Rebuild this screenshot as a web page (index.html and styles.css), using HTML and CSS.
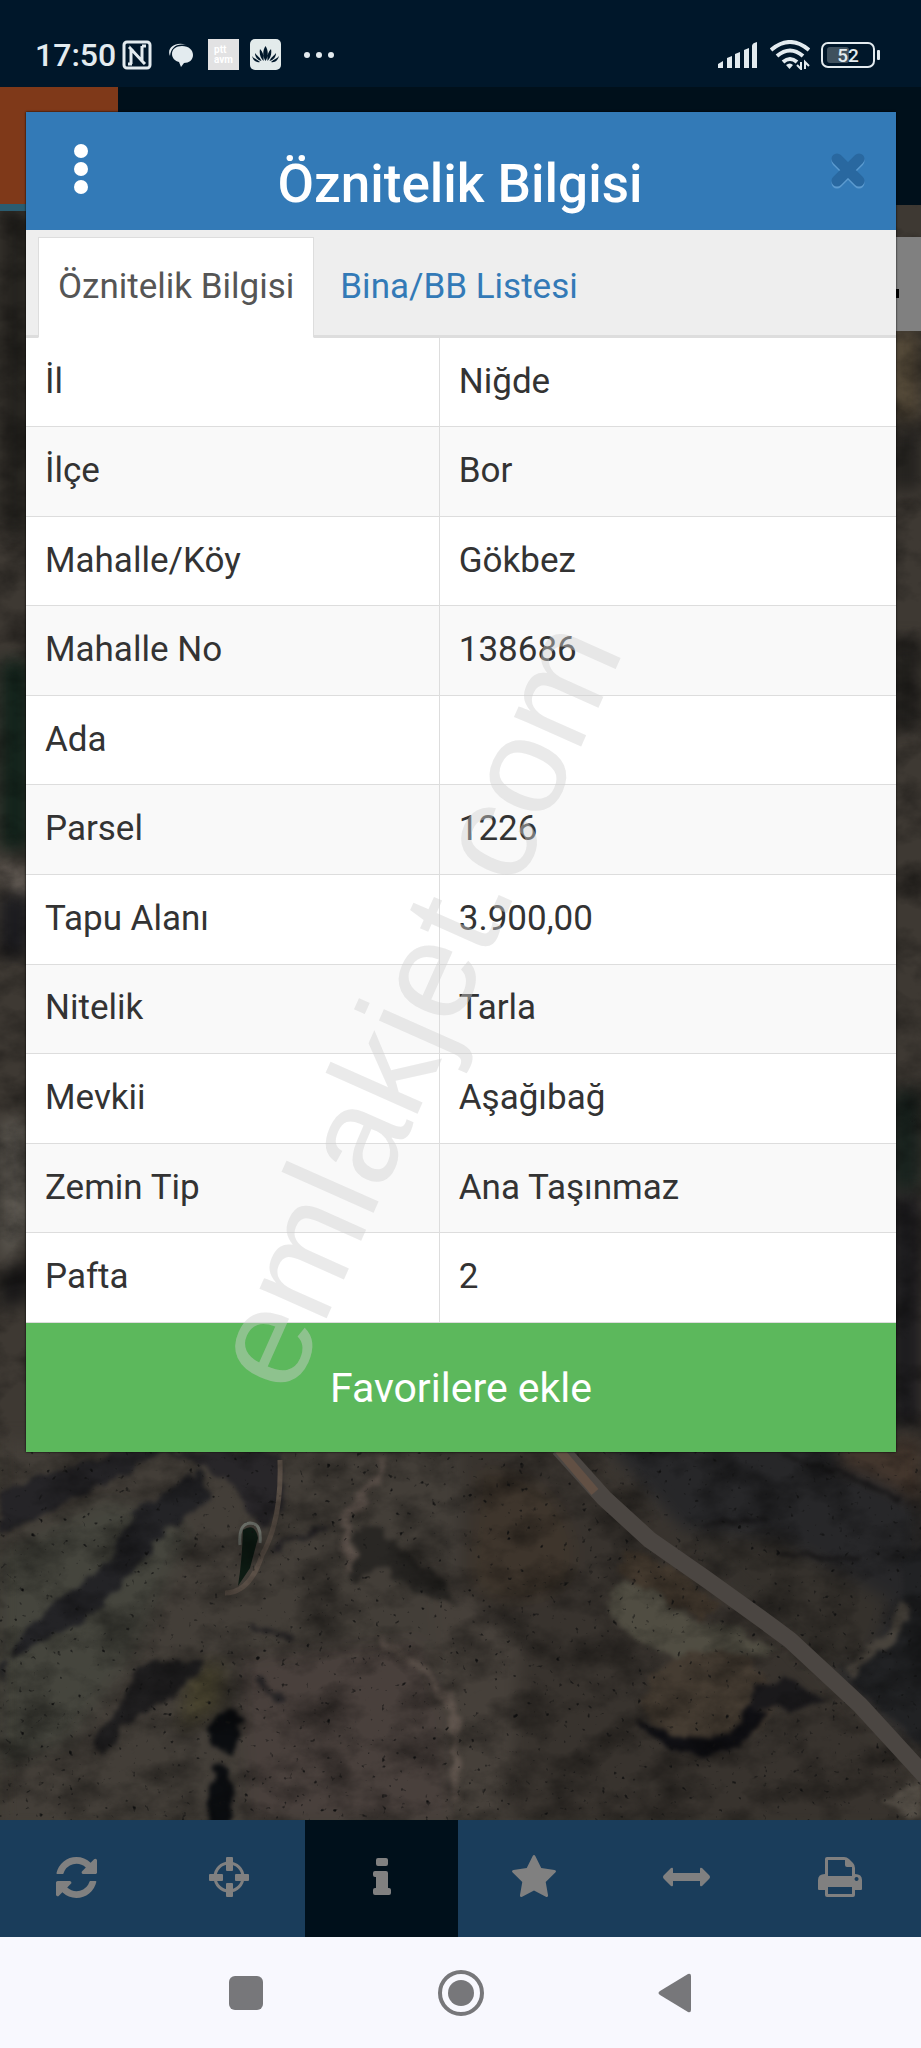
FILE: index.html
```html
<!doctype html>
<html lang="tr">
<head>
<meta charset="utf-8">
<title>Öznitelik Bilgisi</title>
<meta name="viewport" content="width=device-width, initial-scale=1">
<link rel="stylesheet" href="styles.css">
</head>
<body>
<div class="status-bar">
  <div class="status-left">
    <span class="clock">17:50</span>
    <svg width="30" height="30" viewBox="0 0 30 30" fill="none" stroke="#e3ebef"><rect x="2" y="2" width="26" height="26" rx="3" stroke-width="3"/><path d="M9 24V9l11 12V6M6 24h4M7 7l4 4M20 6h4M19 20l4 4" stroke-width="3"/></svg>
    <svg class="bubble" width="26" height="26" viewBox="0 0 26 26"><path d="M2 14C-2 6 8-1 18 3 8 1 3 6 2 14z" fill="#e3ebef"/><path d="M14 4c7 0 11 4 11 9s-4 8-9 8l-3 4-2-5c-4-1-7-4-7-8 0-5 4-8 10-8z" fill="#e3ebef"/></svg>
    <svg class="ptt" width="31" height="31" viewBox="0 0 31 31"><rect width="31" height="31" fill="#e2e2e3"/><text x="6" y="14">ptt</text><text x="6" y="24">avm</text></svg>
    <svg class="lotus" width="31" height="31" viewBox="0 0 31 31"><rect width="31" height="31" rx="5" fill="#e3ebeb"/><path d="M15.500 7c3 4 3 11 0 15-3-4-3-11 0-15zM10 10c3 3 4 7 3.500 12-3-3-4.500-7-3.500-12zM21 10c-3 3-4 7-3.500 12 3-3 4.500-7 3.500-12zM5 14c2 3 5 4 6.500 8-4-1-6.500-4-6.500-8zM26 14c-2 3-5 4-6.500 8 4-1 6.500-4 6.500-8zM2 17c2 3 5 3 8 6-4 1-7-2-8-6zM29 17c-2 3-5 3-8 6 4 1 7-2 8-6z" fill="#00172a"/></svg>
    <svg class="dots" width="30" height="8" viewBox="0 0 30 8" fill="#e3ebef"><circle cx="3" cy="4" r="3"/><circle cx="15" cy="4" r="3"/><circle cx="27" cy="4" r="3"/></svg>
  </div>
  <div class="status-right">
    <svg width="42" height="28" viewBox="0 0 42 28" fill="#e3ebef"><path d="M1 27v-4l5-3v7zM10 27V17l5-2v12zM18 27V13l5-2v16zM27 27V9l5-2v20zM35 27V5q0-3 5-4v26z"/></svg>
    <svg width="40" height="30" viewBox="0 0 40 30" fill="none" stroke="#e3ebef" stroke-width="4"><path d="M1 10q19-16 38 0M7 16q13-11 26 0M13 22q7-6 14 0"/><path d="M16 25q4-3 7 0l-3.500 4z" fill="#e3ebef" stroke="none"/><path d="M31 22v7l-4-4M35 29v-7l4 4" stroke-width="2"/></svg>
    <svg class="battery" width="60" height="26" viewBox="0 0 60 26"><rect x="1" y="1" width="52" height="24" rx="6" fill="none" stroke="#e3ebef" stroke-width="2"/><rect x="6" y="5" width="22" height="16" rx="3" fill="#3f515e"/><rect x="56" y="8" width="3" height="10" rx="1" fill="#e3ebef"/><text x="27" y="20" text-anchor="middle">52</text></svg>
  </div>
</div>

<main class="app">
  <div class="screen">
    <svg class="map" viewBox="0 87 921 1733" preserveAspectRatio="xMidYMax slice" color-interpolation-filters="sRGB" aria-hidden="true">
      <defs>
        <filter id="soft" x="-10%" y="-10%" width="120%" height="120%"><feGaussianBlur stdDeviation="8"/></filter>
        <filter id="edge" x="-10%" y="-10%" width="120%" height="120%"><feTurbulence type="fractalNoise" baseFrequency=".06" numOctaves="4" seed="8" result="n"/><feDisplacementMap in="SourceGraphic" in2="n" scale="16" xChannelSelector="R" yChannelSelector="G"/><feGaussianBlur stdDeviation="2"/></filter>
        <filter id="grain" x="0" y="0" width="100%" height="100%"><feTurbulence type="fractalNoise" baseFrequency=".02 .03" numOctaves="6" seed="4"/><feColorMatrix values="0 0 0 0 0  0 0 0 0 0  0 0 0 0 0  .9 0 0 0 -.35"/></filter>
        <filter id="scrub" x="0" y="0" width="100%" height="100%"><feTurbulence type="fractalNoise" baseFrequency=".16" numOctaves="2" seed="12"/><feColorMatrix values="0 0 0 0 .06  0 0 0 0 .06  0 0 0 0 .06  0 6 0 0 -4.200"/></filter>
      </defs>
      <rect y="87" width="921" height="1733" fill="#3e3933"/>
      <g filter="url(#soft)">
        <path d="M0 205h30v330H0z" fill="#25231f"/>
        <path d="M0 660h30v190H0z" fill="#12231b"/>
        <path d="M0 860l30 16v20L0 880z" fill="#857b72"/>
        <path d="M0 895h30v60H0z" fill="#1b1b1f"/>
        <path d="M0 1120h30v110l-30 40z" fill="#5c5851"/>
        <path d="M0 1275l30-15v40l-30 10z" fill="#171617"/>
        <path d="M890 330h31v90h-31z" fill="#554a39"/>
        <path d="M890 430h31v60h-31zM890 640h31v90h-31z" fill="#24221f"/>
        <path d="M890 1090h31v100h-31z" fill="#18221e"/>
        <path d="M890 1195h31v230h-31z" fill="#1d1c1f"/>
        <path d="M0 1440h460v390H0z" fill="#433e38"/>
        <path d="M0 1550l110-50 80 30-60 130-60 80-70 30z" fill="#45453d"/>
        <path d="M240 1660l180-20 50 180H250z" fill="#49403c"/>
        <path d="M460 1440h120l180 172 161 170v48H460z" fill="#38332e"/>
        <path d="M600 1440h321v312l-100-90-110-100z" fill="#272729"/>
        <path d="M840 1440h81v67q-40-30-81-40z" fill="#43362d"/>
        <path d="M680 1530l100 10 110 60-20 60-40 10z" fill="#35312c"/>
        <path d="M480 1470q70 0 90 60t-40 70-60-40z" fill="#3e352c"/>
        <path d="M430 1560l90 80-10 190h-60z" fill="#46403a"/>
        <path d="M185 1680q20-25 40-15l-5 45-40 20z" fill="#48432f"/>
      </g>
      <g filter="url(#edge)">
        <path d="M0 1490l60-20 70-22h40l-70 38-50 24-50 25z" fill="#252427"/>
        <path d="M200 1470q-55 30-70 50l-20 40-50 42-35 25-25 55v-20l40-20 50-25 45-48 35-42 40-28z" fill="#232326"/>
        <path d="M165 1452h115l5 55-25 25-25-45-30-20z" fill="#282629"/>
        <path d="M140 1662h65l-25 30-50 30-30 35-5-22 30-35z" fill="#201f20"/>
        <path d="M355 1530q25-10 45 20l45 30 10 25-35-10-40-30-28 15z" fill="#292724"/>
        <path d="M225 1710q20 0 17 20l-8 25-25-12q-8-18 16-33zM213 1762l18 10 2 60h-24z" fill="#0b0d10"/>
        <path d="M270 1550l60-25M250 1625l45 15M255 1680l30 20" fill="none" stroke="#252325" stroke-width="5"/>
        <path d="M385 1455q-5 30-40 60l5 60M380 1640q60 30 75 80l3 80" fill="none" stroke="#5f544d" stroke-width="8"/>
        <path d="M605 1605l15-22 22 0 48 35 50 12 35 22-70 15-40-15-45-22z" fill="#504d42"/>
        <path d="M620 1550l40 10 60 45-20 15-50-30-30-15z" fill="#43392e"/>
        <path d="M640 1700q15-40 60-48t70 30q15 40-30 62t-80-5z" fill="#453c32"/>
        <path d="M636 1718q25 40 70 36t60-40l-15-10q-10 30-42 33t-73-19z" fill="#101014"/>
        <path d="M750 1690l35-12 40 22-30 10-40-2z" fill="#1a191b"/>
        <path d="M902 1560v60l-25 30-30 25 20 20 64 60V1540z" fill="#212224"/>
        <path d="M905 1600q-5 40-40 55l-20 20" fill="none" stroke="#48433c" stroke-width="10"/>
        <path d="M785 1455q70 20 115 45M700 1525l70-5M780 1555l80 5" fill="none" stroke="#171617" stroke-width="4"/>
        <path d="M880 1800l41-20v40z" fill="#544e46"/>
      </g>
      <path d="M240 1545q-2-21 10-22 12 0 10 20" fill="none" stroke="#6c7069" stroke-width="3"/>
      <path d="M243 1530q12-8 15 8l-8 30-12 18q4-25 5-56z" fill="#0d1b13"/>
      <path d="M280 1460q2 60-18 95-12 38-37 38" fill="none" stroke="#5b5047" stroke-width="5"/>
      <rect y="205" width="921" height="1615" filter="url(#grain)"/>
      <rect y="1452" width="921" height="368" filter="url(#scrub)"/>
      <path d="M559 1448l45 50 46 42q70 48 140 100l70 65 66 72" fill="none" stroke="#4b4642" stroke-width="17"/>
      <path d="M559 1450l36 42" fill="none" stroke="#625044" stroke-width="9"/>
    </svg>
    <div class="brand"><span class="brand-logo"></span></div>
    <div class="search"></div>
  </div>

  <section class="modal">
    <header class="modal-header">
      <button class="more" type="button" aria-label="Menü"><svg width="14" height="50" viewBox="0 0 14 50" fill="#fff"><circle cx="7" cy="7" r="7"/><circle cx="7" cy="25" r="7"/><circle cx="7" cy="43" r="7"/></svg></button>
      <h1>Öznitelik Bilgisi</h1>
      <button class="close" type="button" aria-label="Kapat"><svg width="36" height="38" viewBox="0 0 36 38" fill="none" stroke-width="11" stroke-linejoin="round" stroke-linecap="round"><path d="M7 9l22 22M29 9L7 31" stroke="#5c9bd0"/><path d="M7 7l22 22M29 7L7 29" stroke="#2968a0"/></svg></button>
    </header>
    <nav class="tabs">
      <a class="tab active" href="#">Öznitelik Bilgisi</a>
      <a class="tab" href="#">Bina/BB Listesi</a>
    </nav>
    <table class="attributes">
      <tr><th scope="row">İl</th><td>Niğde</td></tr>
      <tr><th scope="row">İlçe</th><td>Bor</td></tr>
      <tr><th scope="row">Mahalle/Köy</th><td>Gökbez</td></tr>
      <tr><th scope="row">Mahalle No</th><td>138686</td></tr>
      <tr><th scope="row">Ada</th><td></td></tr>
      <tr><th scope="row">Parsel</th><td>1226</td></tr>
      <tr><th scope="row">Tapu Alanı</th><td>3.900,00</td></tr>
      <tr><th scope="row">Nitelik</th><td>Tarla</td></tr>
      <tr><th scope="row">Mevkii</th><td>Aşağıbağ</td></tr>
      <tr><th scope="row">Zemin Tip</th><td>Ana Taşınmaz</td></tr>
      <tr><th scope="row">Pafta</th><td>2</td></tr>
    </table>
    <button class="favorite" type="button">Favorilere ekle</button>
  </section>
</main>

<nav class="toolbar">
  <button type="button" aria-label="Yenile"><svg width="41" height="41" viewBox="0 0 1536 1536"><path d="M1511 928q0 5-1 7-64 268-268 434.500t-478 166.500q-146 0-282.500-55t-243.500-157l-129 129q-19 19-45 19t-45-19-19-45v-448q0-26 19-45t45-19h448q26 0 45 19t19 45-19 45l-137 137q71 66 161 102t187 36q134 0 250-65t186-179q11-17 53-117 8-23 30-23h192q13 0 22.500 9.500t9.500 22.500zm25-800v448q0 26-19 45t-45 19h-448q-26 0-45-19t-19-45 19-45l138-138q-148-137-349-137-134 0-250 65t-186 179q-11 17-53 117-8 23-30 23h-199q-13 0-22.500-9.500t-9.500-22.500v-7q65-268 270-434.500t480-166.500q146 0 284 55.500t245 156.500l130-129q19-19 45-19t45 19 19 45z"/></svg></button>
  <button type="button" aria-label="Konum"><svg width="40" height="40" viewBox="0 0 40 40"><circle cx="20" cy="20" r="14" fill="none" stroke="#808080" stroke-width="3"/><rect x="17" width="7" height="14" rx="1"/><rect x="17" y="26" width="7" height="14" rx="1"/><rect y="17" width="14" height="7" rx="1"/><rect x="26" y="17" width="14" height="7" rx="1"/></svg></button>
  <button class="active" type="button" aria-label="Bilgi"><svg width="18" height="40" viewBox="0 0 18 40"><path d="M5 1h8q2 0 2 2v4q0 2-2 2H5q-2 0-2-2V3q0-2 2-2zM2 14h11q2 0 2 2v15h1q2 0 2 2v3q0 2-2 2H2q-2 0-2-2v-3q0-2 2-2h1V20H2q-2 0-2-2v-2q0-2 2-2z"/></svg></button>
  <button type="button" aria-label="Favoriler"><svg width="44" height="44" viewBox="0 0 1664 1664"><path d="M1664 615q0 22-26 48l-363 354 86 500q1 7 1 20 0 21-10.500 35.500t-30.500 14.500q-19 0-40-12l-449-236-449 236q-22 12-40 12-21 0-31.500-14.500t-10.500-35.500q0-6 2-20l86-500-364-354q-25-27-25-48 0-37 56-46l502-73 225-455q19-41 49-41t49 41l225 455 502 73q56 9 56 46z"/></svg></button>
  <button type="button" aria-label="Ölçüm"><svg width="47" height="40" viewBox="0 0 47 40"><path d="M0 20q0-1 1-2l7-7q2-1 2 1v4h27v-4q0-2 2-1l7 7q2 2 0 4l-7 7q-2 1-2-1v-4H10v4q0 2-2 1l-7-7q-1-1-1-2z"/></svg></button>
  <button type="button" aria-label="Yazdır"><svg width="44" height="40" viewBox="0 0 44 40"><path fill-rule="evenodd" d="M9 0h17q3 0 5 2l4 4q2 2 2 5v6q7 0 7 6v9q0 1-1 1h-6v5q0 2-2 2H9q-2 0-2-2v-5H1q-1 0-1-1v-9q0-6 7-6V2q0-2 2-2zM10 3v16h24v-9h-5q-2 0-2-2V3zM10 30v7h24v-7zM38.500 20a2 2 0 1 0 .1 0z"/></svg></button>
</nav>

<nav class="system-nav">
  <button type="button" aria-label="Son uygulamalar"><svg width="34" height="34" viewBox="0 0 34 34"><rect width="34" height="34" rx="6"/></svg></button>
  <button type="button" aria-label="Ana ekran"><svg width="48" height="48" viewBox="0 0 48 48"><circle cx="24" cy="24" r="21" fill="none" stroke="#77777a" stroke-width="4"/><circle cx="24" cy="24" r="13"/></svg></button>
  <button type="button" aria-label="Geri"><svg width="34" height="40" viewBox="0 0 34 40"><path d="M2 18L30 1q3-1 3 2v34q0 3-3 2L2 22q-3-2 0-4z"/></svg></button>
</nav>

<div class="watermark">emlakjet.com</div>
</body>
</html>
```
FILE: styles.css
```css
* {
  box-sizing: border-box;
}
body {
  margin: 0;
  min-height: 100vh;
  display: flex;
  flex-direction: column;
  position: relative;
  overflow-x: hidden;
  font-family: Roboto, "Noto Sans", sans-serif;
  font-size: 35px;
  line-height: 48px;
  color: #333;
}
button {
  border: 0;
  padding: 0;
  background: none;
  font: inherit;
  cursor: pointer;
}
svg {
  display: block;
}

.status-bar {
  height: 87px;
  padding: 22px 40px 0 35px;
  display: flex;
  justify-content: space-between;
  align-items: center;
  background-color: #00172a;
  color: #e3ebef;
}
.status-left,
.status-right {
  display: flex;
  align-items: center;
  gap: 11px;
}
.clock {
  font-size: 32px;
  font-weight: 500;
  margin-right: -5px;
}
.bubble {
  margin: 0 3px 0 5px;
}
.dots {
  margin-left: 12px;
}
.ptt text {
  font-size: 10px;
  font-weight: 700;
  fill: #fff;
}
.battery text {
  font-size: 19px;
  font-weight: 500;
  fill: #e3ebef;
}

.app {
  position: relative;
  flex: 1;
  padding: 25px 25px 368px 26px;
}
/* dimmed map screen behind the dialog */
.screen {
  position: absolute;
  inset: 0;
  overflow: hidden;
  background-color: #35312c;
}
.map {
  position: absolute;
  width: 100%;
  height: 100%;
}
.brand {
  position: relative;
  height: 118px;
  background-color: #00101b;
}
.brand-logo {
  display: block;
  width: 118px;
  height: 124px;
  background-color: #7f3919;
  border-bottom: 7px solid #2a5c70;
}
.search {
  position: relative;
  height: 94px;
  margin: 32px 0 0 50%;
  background-color: #808080;
}
.search::after {
  content: "";
  position: absolute;
  right: 22px;
  top: 52px;
  width: 8px;
  height: 9px;
  background-color: #000;
}

.modal {
  position: relative;
  background-color: #fff;
  box-shadow: 0 0 2px #000;
}
.modal-header {
  height: 118px;
  padding: 0 30px 0 48px;
  display: flex;
  justify-content: space-between;
  align-items: center;
  background-color: #337ab7;
  color: #fff;
}
.modal-header h1 {
  margin: 0;
  padding-top: 26px;
  font-size: 53px;
  line-height: 60px;
  font-weight: 500;
}
.more {
  width: 16px;
  padding-bottom: 5px;
}
.close {
  width: 36px;
}
.tabs {
  height: 108px;
  padding: 7px 12px 0;
  display: flex;
  gap: 6px;
  background-color: #eee;
  border-bottom: 3px solid #ddd;
}
.tab {
  height: 101px;
  padding: 25px 19px;
  border: 1px solid transparent;
  color: #337ab7;
  text-decoration: none;
}
.tab.active {
  color: #555;
  background-color: #fff;
  border-color: #ddd;
  border-bottom-color: #fff;
}
.attributes {
  width: 100%;
  height: 985px;
  border-collapse: collapse;
}
.attributes th,
.attributes td {
  padding: 0 19px 1px;
  text-align: left;
  font-weight: 400;
  border-bottom: 1px solid #ddd;
}
.attributes th {
  width: 47.5%;
  border-right: 1px solid #ddd;
}
.attributes tr:nth-child(even) {
  background-color: #f9f9f9;
}
.favorite {
  display: block;
  width: 100%;
  height: 129px;
  background-color: #5cb85c;
  color: #fff;
  font-size: 41px;
}

.toolbar {
  height: 117px;
  padding-right: 5px;
  display: grid;
  grid-template-columns: repeat(6, 1fr);
  background-color: #1a3d5b;
}
.toolbar button {
  display: flex;
  align-items: center;
  justify-content: center;
  padding-bottom: 3px;
}
.toolbar .active {
  background-color: #00101b;
}
.toolbar svg {
  fill: #808080;
}
.system-nav {
  height: 111px;
  padding: 0 15%;
  display: grid;
  grid-template-columns: repeat(3, 1fr);
  background-color: #f8f8fe;
}
.system-nav button {
  display: flex;
  align-items: center;
  justify-content: center;
}
.system-nav svg {
  fill: #77777a;
}

.watermark {
  position: absolute;
  left: 45%;
  top: 49%;
  transform: translate(-50%, -50%) rotate(-66deg);
  font-family: "Liberation Sans", Arial, sans-serif;
  font-size: 139px;
  line-height: 152px;
  color: rgba(207, 207, 207, .44);
  pointer-events: none;
}
```
